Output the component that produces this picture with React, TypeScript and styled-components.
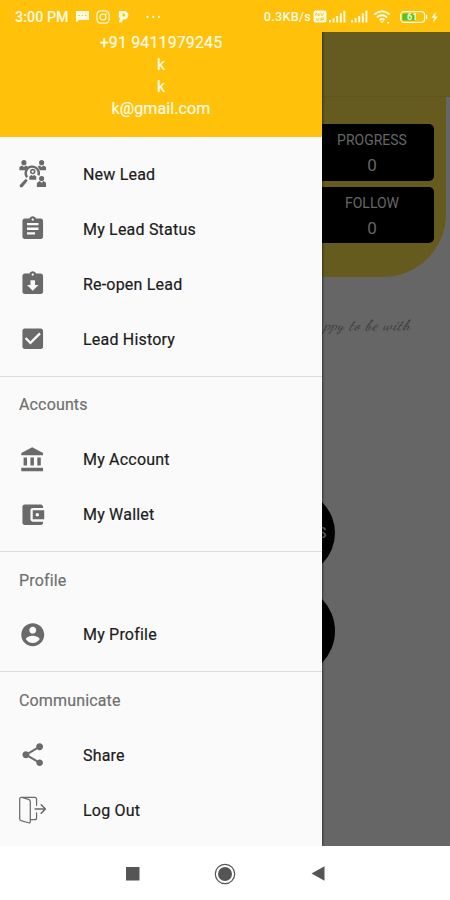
import React from "react";
import styled, { createGlobalStyle } from "styled-components";

const GlobalStyle = createGlobalStyle`
  * { box-sizing: border-box; }
  body { margin: 0; background: #fff; font-family: Roboto, "Noto Sans", sans-serif; }
`;

const Screen = styled.div`
  width: 450px;
  height: 900px;
  display: flex;
  flex-direction: column;
  overflow: hidden;
  background: #fff;
`;

const StatusBar = styled.header`
  height: 32px;
  flex: none;
  display: flex;
  justify-content: space-between;
  align-items: center;
  padding: 1px 10px 0 15px;
  background: #ffc10a;
  color: #fffbe6;
`;

const StatusGroup = styled.div<{ $gap: number }>`
  display: flex;
  align-items: center;
  gap: ${(p) => p.$gap}px;
  svg { display: block; flex: none; }
`;

const StatusText = styled.span<{ $size: number; $spacing: number }>`
  font-size: ${(p) => p.$size}px;
  font-weight: 500;
  letter-spacing: ${(p) => p.$spacing}px;
  white-space: nowrap;
`;

const Main = styled.main`
  height: 814px;
  flex: none;
  display: flex;
  overflow: hidden;
  background: #666;
`;

const Drawer = styled.aside`
  width: 322px;
  flex: none;
  display: flex;
  flex-direction: column;
  background: #fafafa;
  box-shadow: 1px 0 2px rgba(0, 0, 0, 0.45);
  z-index: 1;
`;

const Account = styled.div`
  height: 104.5px;
  flex: none;
  background: #ffc10a;
  color: #fffbe8;
  text-align: center;
  font-size: 16px;
  line-height: 22px;
  letter-spacing: 0.12px;
  -webkit-text-stroke: 0.2px #fffbe8;
`;

const Menu = styled.nav`
  padding-top: 10px;
`;

const Section = styled.section`
  & + & {
    margin-top: 9px;
    border-top: 1px solid #dcdcdc;
  }
`;

const SectionTitle = styled.h2`
  margin: 0;
  height: 55.4px;
  padding: 1px 19px 0;
  display: flex;
  align-items: center;
  font-size: 16px;
  font-weight: 400;
  letter-spacing: 0.15px;
  color: #707070;
  -webkit-text-stroke: 0.2px #707070;
`;

const Item = styled.div`
  height: 55px;
  padding-left: 18.5px;
  display: flex;
  align-items: center;
  gap: 37px;
  color: #6a6a6a;
  svg { display: block; flex: none; }
`;

const ItemLabel = styled.span`
  font-size: 16px;
  font-weight: 400;
  -webkit-text-stroke: 0.2px #1c1c1c;
  letter-spacing: 0.2px;
  color: #1c1c1c;
`;

const Page = styled.div`
  flex: 1;
  min-width: 0;
  overflow: hidden;
  display: flex;
  flex-direction: column;
  color: #666;
`;

const AppBar = styled.div`
  height: 65px;
  flex: none;
  background: #655a20;
  border-bottom: 1px solid #5f551f;
`;

const Summary = styled.div`
  width: 124px;
  height: 180px;
  flex: none;
  padding: 27px 12px 0 0;
  display: flex;
  flex-direction: column;
  gap: 6px;
  background: #665b1e;
  border-bottom-right-radius: 63px;
`;

const Tile = styled.div`
  height: 56.5px;
  padding-top: 5px;
  display: flex;
  flex-direction: column;
  align-items: center;
  background: #000;
  border-radius: 0 5px 5px 0;
  padding-right: 12px;
`;

const TileTitle = styled.span`
  font-size: 14px;
  line-height: 22px;
`;

const TileValue = styled.span`
  font-size: 17px;
  line-height: 28px;
`;

const Quote = styled.p`
  width: 89px;
  height: 24px;
  margin: 37px 0 0;
  display: flex;
  justify-content: flex-end;
  white-space: nowrap;
  font: italic 15px/22px "Dancing Script", "Liberation Serif", cursive;
  letter-spacing: 0.9px;
  color: #393939;
`;

const Bubble = styled.div<{ $size: number; $top: number }>`
  width: ${(p) => p.$size}px;
  height: ${(p) => p.$size}px;
  flex: none;
  margin: ${(p) => p.$top}px 0 0 ${(p) => 12.5 - p.$size}px;
  padding-right: 8px;
  display: flex;
  align-items: center;
  justify-content: flex-end;
  border-radius: 50%;
  background: #000;
  font-size: 15px;
`;

const NavBar = styled.footer`
  height: 54px;
  flex: none;
  display: flex;
  justify-content: space-between;
  align-items: center;
  padding: 1px 124px 0 124.5px;
  background: #fff;
  svg { display: block; }
`;

const paths = {
  assignment:
    "M19 3h-4.18C14.4 1.84 13.3 1 12 1c-1.3 0-2.4.84-2.82 2H5c-1.1 0-2 .9-2 2v14c0 1.1.9 2 2 2h14c1.1 0 2-.9 2-2V5c0-1.1-.9-2-2-2zm-7 0c.55 0 1 .45 1 1s-.45 1-1 1-1-.45-1-1 .45-1 1-1zm2 14H7v-2h7v2zm3-4H7v-2h10v2zm0-4H7V7h10v2z",
  returned:
    "M19 3h-4.18C14.4 1.84 13.3 1 12 1c-1.3 0-2.4.84-2.82 2H5c-1.1 0-2 .9-2 2v14c0 1.1.9 2 2 2h14c1.1 0 2-.9 2-2V5c0-1.1-.9-2-2-2zm-7 0c.55 0 1 .45 1 1s-.45 1-1 1-1-.45-1-1 .45-1 1-1zm0 15l-5-5h3V9h4v4h3l-5 5z",
  checkbox:
    "M19 3H5c-1.11 0-2 .9-2 2v14c0 1.1.89 2 2 2h14c1.11 0 2-.9 2-2V5c0-1.1-.89-2-2-2zm-9 14l-5-5 1.41-1.41L10 14.17l7.59-7.59L19 8l-9 9z",
  bank: "M4 10v7h3v-7H4zm6 0v7h3v-7h-3zM2 22h19v-3H2v3zm14-12v7h3v-7h-3zm-4.5-9L2 6v2h19V6l-9.5-5z",
  wallet:
    "M21 18v1c0 1.1-.9 2-2 2H5c-1.11 0-2-.9-2-2V5c0-1.1.89-2 2-2h14c1.1 0 2 .9 2 2v1h-9c-1.11 0-2 .9-2 2v8c0 1.1.89 2 2 2h9zm-9-2h10V8H12v8zm4-2.5c-.83 0-1.5-.67-1.5-1.5s.67-1.5 1.5-1.5 1.5.67 1.5 1.5-.67 1.5-1.5 1.5z",
  person:
    "M12 2C6.48 2 2 6.48 2 12s4.48 10 10 10 10-4.48 10-10S17.52 2 12 2zm0 3c1.66 0 3 1.34 3 3s-1.34 3-3 3-3-1.34-3-3 1.34-3 3-3zm0 14.2c-2.5 0-4.71-1.28-6-3.22.03-1.99 4-3.08 6-3.08 1.99 0 5.97 1.09 6 3.08-1.29 1.94-3.5 3.22-6 3.22z",
  share:
    "M18 16.08c-.76 0-1.44.3-1.96.77L8.91 12.7c.05-.23.09-.46.09-.7s-.04-.47-.09-.7l7.05-4.11c.54.5 1.25.81 2.04.81 1.66 0 3-1.34 3-3s-1.34-3-3-3-3 1.34-3 3c0 .24.04.47.09.7L8.04 9.81C7.5 9.31 6.79 9 6 9c-1.66 0-3 1.34-3 3s1.34 3 3 3c.79 0 1.5-.31 2.04-.81l7.12 4.16c-.05.21-.08.43-.08.65 0 1.61 1.31 2.92 2.92 2.92s2.92-1.31 2.92-2.92-1.31-2.92-2.92-2.92z",
};

function Glyph({ name }: { name: keyof typeof paths }) {
  return (
    <svg width="27.5" height="27.5" viewBox="0 0 24 24" fill="currentColor">
      <path d={paths[name]} />
    </svg>
  );
}

function LeadIcon() {
  return (
    <svg width="27.5" height="27.5" viewBox="0 0 28 28" fill="currentColor">
      <circle cx="5" cy="2.7" r="2.6" />
      <path d="M.4 10.4V7.1L3.1 5.5 5 7.2l2-1.7 2 1.1-2.4 3.8z" />
      <circle cx="23" cy="2.7" r="2.6" />
      <path d="M27.6 10.4V7.1l-2.7-1.6L23 7.2l-2-1.7-2 1.1 2.4 3.8z" />
      <path d="M8.2 17.5a6.7 6.7 0 1 1 11.6-1.8" fill="none" stroke="currentColor" strokeWidth="2.4" />
      <circle cx="14" cy="11.8" r="2" fill="none" stroke="currentColor" strokeWidth="1.6" />
      <path d="M10.5 20v-3.3l2.2-1.5 1.3 1.2 1.4-1.2 2.2 1.5V20z" />
      <path d="m6.9 19.2 1.9 2-5.4 6.5H.8v-2.3z" />
      <circle cx="23" cy="18.8" r="2.6" />
      <path d="M18.2 27.5v-4.1l2.9-1.9 1.9 1.6 2-1.6 2.8 1.9v4.1z" />
    </svg>
  );
}

function LogoutIcon() {
  return (
    <svg width="27.5" height="28" viewBox="0 0 28 28" fill="none" stroke="currentColor" strokeWidth="1.25" strokeLinecap="round" strokeLinejoin="round">
      <path d="M3 1.2 9.7 3.1q1.8.6 1.8 2.4v20.2q0 1.9-1.8 1.3L2 24.8Q.7 24.3.7 22.9V3Q.7 1 3 1.2z" />
      <path d="M3 1.1h12.8q2.1 0 2.1 2v6.1M12 23.8h4q1.9 0 1.9-2v-5" />
      <path d="M16.5 13h10.3m-4.2-4.3 4.3 4.3-4.3 4.3" strokeWidth="1.6" />
    </svg>
  );
}

function Signal() {
  return (
    <svg width="17" height="13" viewBox="0 0 17 13" fill="currentColor">
      <path d="M0 10h2v2.5H0zM3.6 8.3h2v4.2h-2zM7.2 6h2v6.5h-2zM10.8 3.2h2v9.3h-2zM14.4.5h2v12h-2z" />
    </svg>
  );
}

function StatusIcons() {
  return (
    <>
      <svg width="15" height="13" viewBox="0 0 15 13">
        <path d="M1 1h13v9H4l-3 2.5z" fill="currentColor" />
        <path d="M3.3 5.5h1.5m1.8 0h1.5m1.8 0h1.5" stroke="#ffc10a" strokeWidth="1.2" />
      </svg>
      <svg width="14" height="14" viewBox="0 0 14 14" fill="none" stroke="currentColor" strokeWidth="1.2">
        <rect x=".9" y=".9" width="12.2" height="12.2" rx="3.6" />
        <circle cx="7" cy="7" r="3" />
        <circle cx="10.4" cy="3.6" r=".3" />
      </svg>
      <svg width="13" height="13" viewBox="0 0 13 13" fill="currentColor">
        <path fillRule="evenodd" d="M3 1h5.2a4.2 4.2 0 0 1 0 8.4H6.8l-1 3H3l1-5H2.7zM6.4 3.5v3h1.3a1.5 1.5 0 0 0 0-3z" />
      </svg>
      <svg width="28" height="4" viewBox="0 0 28 4" fill="currentColor">
        <circle cx="12.5" cy="2" r="1.15" />
        <circle cx="18.2" cy="2" r="1.15" />
        <circle cx="24" cy="2" r="1.15" />
      </svg>
    </>
  );
}

const sections = [
  {
    title: "",
    items: [
      { label: "New Lead", icon: <LeadIcon /> },
      { label: "My Lead Status", icon: <Glyph name="assignment" /> },
      { label: "Re-open Lead", icon: <Glyph name="returned" /> },
      { label: "Lead History", icon: <Glyph name="checkbox" /> },
    ],
  },
  {
    title: "Accounts",
    items: [
      { label: "My Account", icon: <Glyph name="bank" /> },
      { label: "My Wallet", icon: <Glyph name="wallet" /> },
    ],
  },
  { title: "Profile", items: [{ label: "My Profile", icon: <Glyph name="person" /> }] },
  {
    title: "Communicate",
    items: [
      { label: "Share", icon: <Glyph name="share" /> },
      { label: "Log Out", icon: <LogoutIcon /> },
    ],
  },
];

export default function App() {
  return (
    <Screen>
      <GlobalStyle />
      <StatusBar>
        <StatusGroup $gap={6}>
          <StatusText $size={14.3} $spacing={0.05}>3:00 PM</StatusText>
          <StatusIcons />
        </StatusGroup>
        <StatusGroup $gap={5}>
          <StatusGroup $gap={2}>
            <StatusText $size={12.7} $spacing={0.25}>0.3KB/s</StatusText>
            <svg width="14" height="13" viewBox="0 0 14 13">
              <rect x=".5" y=".5" width="13" height="12" rx="2" fill="currentColor" />
              <path d="M3 6V3l3 3V3m1.5 0L9 6l1.7-3M3 8l1.5 3L6 8m2 0v3m0-3h3m-3 1.5h3" fill="none" stroke="#ffc10a" strokeWidth=".9" />
            </svg>
            <Signal />
          </StatusGroup>
          <Signal />
          <svg width="19" height="14" viewBox="0 0 19 14" fill="none" stroke="currentColor" strokeWidth="1.9">
            <path d="M1.2 4.6q7.8-6.5 15.6 0M3.8 7.5q5.2-4.3 10.4 0M6.5 10q2.5-2 5 0" />
            <path d="m7.2 11.2 1.8 2 1.8-2z" fill="currentColor" stroke="none" />
            <path d="M14.2 12.8h2.2" />
          </svg>
          <svg width="43" height="14" viewBox="0 0 43 14">
            <rect x="3.7" y="1.6" width="24" height="10.8" rx="3.4" fill="none" stroke="currentColor" strokeWidth="1.3" />
            <path d="M29 4.8h1.2v4.4H29z" fill="currentColor" />
            <rect x="5.5" y="3.4" width="13" height="7.2" rx="1.5" fill="#4fc51d" />
            <text x="10" y="10.4" fontSize="9" fontWeight="700" fill="currentColor">61</text>
            <path d="m38.7 1.8-4.2 6h2.7L35.8 13l5-6.6h-2.6z" fill="currentColor" />
          </svg>
        </StatusGroup>
      </StatusBar>
      <Main>
        <Drawer>
          <Account>
            <div>+91 9411979245</div>
            <div>k</div>
            <div>k</div>
            <div>k@gmail.com</div>
          </Account>
          <Menu>
            {sections.map((section) => (
              <Section key={section.title}>
                {section.title && <SectionTitle>{section.title}</SectionTitle>}
                {section.items.map((item) => (
                  <Item key={item.label}>
                    {item.icon}
                    <ItemLabel>{item.label}</ItemLabel>
                  </Item>
                ))}
              </Section>
            ))}
          </Menu>
        </Drawer>
        <Page>
          <AppBar />
          <Summary>
            <Tile>
              <TileTitle>PROGRESS</TileTitle>
              <TileValue>0</TileValue>
            </Tile>
            <Tile>
              <TileTitle>FOLLOW</TileTitle>
              <TileValue>0</TileValue>
            </Tile>
          </Summary>
          <Quote>ppy to be with</Quote>
          <Bubble $size={86} $top={152}>S</Bubble>
          <Bubble $size={92} $top={9} />
        </Page>
      </Main>
      <NavBar>
        <svg width="15" height="15" viewBox="0 0 15 15">
          <rect x="1" y="1" width="13.5" height="13.5" fill="#555" />
        </svg>
        <svg width="22" height="22" viewBox="0 0 22 22">
          <circle cx="11" cy="11" r="9.7" fill="none" stroke="#555" strokeWidth="1.2" />
          <circle cx="11" cy="11" r="7" fill="#555" />
        </svg>
        <svg width="15" height="15" viewBox="0 0 15 15">
          <path d="M13.5.3v14.4L.5 7.5z" fill="#555" />
        </svg>
      </NavBar>
    </Screen>
  );
}
